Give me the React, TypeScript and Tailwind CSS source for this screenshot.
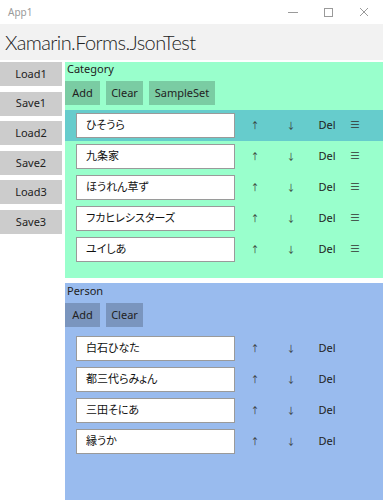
import { useState } from 'react'

const CATEGORIES = ['ひそうら', '九条家', 'ほうれん草ず', 'フカヒレシスターズ', 'ユイしあ']
const PEOPLE = ['白石ひなた', '都三代らみょん', '三田そにあ', '縁うか']

const FONT = "font-['Noto_Sans','Noto_Sans_CJK_JP',sans-serif]"

function TitleBar() {
  return (
    <div className="h-[24px] flex items-center bg-white">
      <span className="pl-[8px] text-[10px] text-[#9a9a9a]">App1</span>
      <div className="ml-auto flex items-center">
        <svg width="36" height="24" viewBox="0 0 36 24">
          <line x1="13" y1="12.5" x2="23" y2="12.5" stroke="#9a9a9a" strokeWidth="1" />
        </svg>
        <svg width="36" height="24" viewBox="0 0 36 24">
          <rect x="13.5" y="8.5" width="8" height="8" fill="none" stroke="#9a9a9a" strokeWidth="1" />
        </svg>
        <svg width="36" height="24" viewBox="0 0 36 24">
          <path d="M13 8 L21 16 M21 8 L13 16" stroke="#9a9a9a" strokeWidth="1" />
        </svg>
      </div>
    </div>
  )
}

function PanelButton({ label, width }: { label: string; width: string }) {
  return (
    <div className={`${width} h-[24px] bg-black/20 flex items-center justify-center text-[11px] text-[#222]`}>
      {label}
    </div>
  )
}

function Row({ text, selected, sortable }: { text: string; selected: boolean; sortable: boolean }) {
  return (
    <div className={`h-[31px] flex items-center pl-[11px] ${selected ? 'bg-[#66cccc]' : ''}`}>
      <div className="w-[159px] h-[25px] bg-white border border-[#9a9a9a] flex items-center pl-[9px] text-[11px] text-[#111] [font-feature-settings:'palt']">
        {text}
      </div>
      <div className="w-[36px] ml-[2px] text-center text-[9px] text-[#333]">↑</div>
      <div className="w-[36px] text-center text-[9px] text-[#333]">↓</div>
      <div className="w-[36px] text-center text-[11px] text-[#222]">Del</div>
      {sortable && <div className="w-[20px] text-center text-[11px] text-[#333]">≡</div>}
    </div>
  )
}

export default function App() {
  const [selected] = useState(0)

  return (
    <div className={`w-[383px] h-[500px] bg-white overflow-hidden flex flex-col ${FONT}`}>
      <TitleBar />
      <div className="h-[36px] bg-[#f2f2f2] flex items-center pl-[5px] font-['Lato',sans-serif] font-light text-[20px] tracking-[-0.6px] text-[#222]">
        Xamarin.Forms.JsonTest
      </div>
      <div className="flex-1 flex gap-[3px] pt-[2px]">
        <div className="w-[62px] flex flex-col gap-[5.6px]">
          {['Load1', 'Save1', 'Load2', 'Save2', 'Load3', 'Save3'].map((b) => (
            <div key={b} className="h-[24px] bg-[#cccccc] flex items-center justify-center text-[11px] text-[#222]">
              {b}
            </div>
          ))}
        </div>
        <div className="flex-1 flex flex-col gap-[5px]">
          <div className="h-[216px] bg-[#99ffcc] flex flex-col">
            <div className="h-[14px] pl-[2px] text-[11px] leading-[14px] text-[#222]">Category</div>
            <div className="flex gap-[6px] mt-[5px]">
              <PanelButton label="Add" width="w-[35px]" />
              <PanelButton label="Clear" width="w-[37px]" />
              <PanelButton label="SampleSet" width="w-[66px]" />
            </div>
            <div className="mt-[5px] flex flex-col">
              {CATEGORIES.map((c, i) => (
                <Row key={c} text={c} selected={i === selected} sortable />
              ))}
            </div>
          </div>
          <div className="flex-1 bg-[#99bbee] flex flex-col pt-[1px]">
            <div className="h-[14px] pl-[2px] text-[11px] leading-[14px] text-[#222]">Person</div>
            <div className="flex gap-[6px] mt-[5px]">
              <PanelButton label="Add" width="w-[35px]" />
              <PanelButton label="Clear" width="w-[37px]" />
            </div>
            <div className="mt-[6px] flex flex-col">
              {PEOPLE.map((p) => (
                <Row key={p} text={p} selected={false} sortable={false} />
              ))}
            </div>
          </div>
        </div>
      </div>
    </div>
  )
}
